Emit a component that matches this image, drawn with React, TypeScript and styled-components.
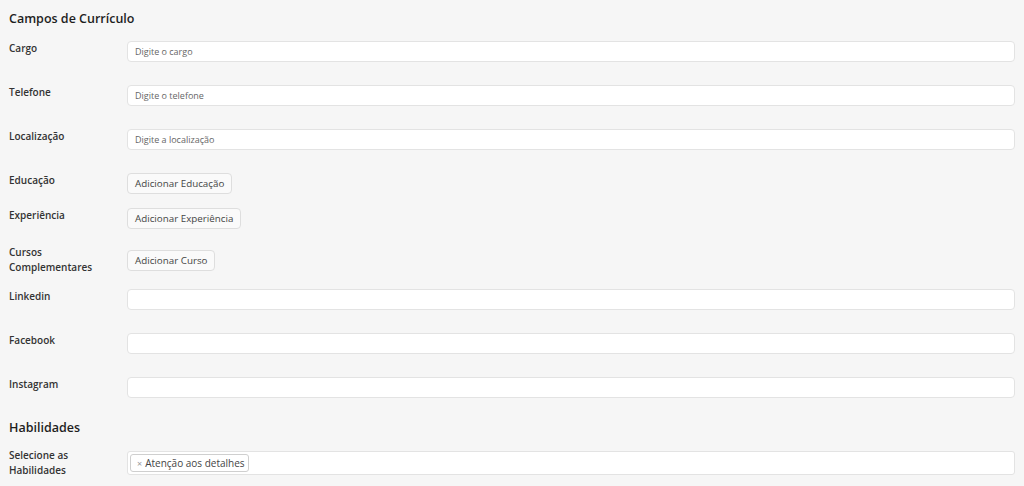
import React, { FC } from 'react';
import styled, { createGlobalStyle } from 'styled-components';

const GlobalStyle = createGlobalStyle`
  html, body {
    margin: 0;
    padding: 0;
    background: #f6f6f6;
    font-family: 'Open Sans', 'Noto Sans', sans-serif;
    color: #2b2b2b;
  }
`;

const Container = styled.div`
  padding: 9px 9px 0 9px;
`;

const SectionTitle = styled.h2<{ $top?: number }>`
  margin: ${(p) => p.$top ?? 0}px 0 0 0;
  font-size: 12.5px;
  font-weight: 600;
  line-height: 20px;
  color: #1e1e1e;
`;

const Row = styled.div<{ $mb: number; $mt?: number; $center?: boolean }>`
  display: grid;
  grid-template-columns: 118px 1fr;
  align-items: ${(p) => (p.$center ? 'center' : 'start')};
  margin-top: ${(p) => p.$mt ?? 0}px;
  margin-bottom: ${(p) => p.$mb}px;
`;

const Label = styled.label`
  font-size: 10px;
  font-weight: 600;
  line-height: 15px;
  color: #333;
`;

const Input = styled.input`
  box-sizing: border-box;
  height: 21px;
  width: 100%;
  border: 1px solid #e3e3e3;
  border-radius: 4px;
  background: #fff;
  padding: 0 7px;
  font-family: inherit;
  font-size: 9px;
  color: #333;
  outline: none;
  &::placeholder {
    color: #666;
  }
`;

const AddButton = styled.button`
  box-sizing: border-box;
  height: 21px;
  padding: 0 7px;
  border: 1px solid #dedede;
  border-radius: 4px;
  background: #fafafa;
  font-family: inherit;
  font-size: 9.8px;
  color: #444;
  justify-self: start;
  cursor: pointer;
`;

const Spacer = styled.div`
  height: 12px;
`;

const MultiSelect = styled.div`
  box-sizing: border-box;
  height: 24px;
  border: 1px solid #e3e3e3;
  border-radius: 3px;
  background: #fff;
  display: flex;
  align-items: center;
  padding: 0 2px;
`;

const Tag = styled.span`
  display: inline-flex;
  align-items: center;
  gap: 3px;
  height: 18px;
  box-sizing: border-box;
  padding: 0 3px 0 6px;
  border: 1px solid #cfcfcf;
  border-radius: 3px;
  font-size: 10px;
  color: #444;
`;

const TagRemove = styled.span`
  font-size: 9px;
  color: #999;
`;

type Field = { label: string; placeholder?: string };

const topFields: Field[] = [
  { label: 'Cargo', placeholder: 'Digite o cargo' },
  { label: 'Telefone', placeholder: 'Digite o telefone' },
  { label: 'Localização', placeholder: 'Digite a localização' },
];

const socialFields: Field[] = [{ label: 'Linkedin' }, { label: 'Facebook' }, { label: 'Instagram' }];

const App: FC = () => (
  <>
    <GlobalStyle />
    <Container>
      <SectionTitle>Campos de Currículo</SectionTitle>
      <Spacer />
      {topFields.map((f) => (
        <Row key={f.label} $mb={23}>
          <Label>{f.label}</Label>
          <Input placeholder={f.placeholder} />
        </Row>
      ))}
      <Row $mb={14}>
        <Label>Educação</Label>
        <AddButton type="button">Adicionar Educação</AddButton>
      </Row>
      <Row $mb={16}>
        <Label>Experiência</Label>
        <AddButton type="button">Adicionar Experiência</AddButton>
      </Row>
      <Row $mb={14} $center>
        <Label>
          Cursos
          <br />
          Complementares
        </Label>
        <AddButton type="button">Adicionar Curso</AddButton>
      </Row>
      {socialFields.map((f, i) => (
        <Row key={f.label} $mb={i === socialFields.length - 1 ? 0 : 23}>
          <Label>{f.label}</Label>
          <Input />
        </Row>
      ))}
      <SectionTitle $top={20}>Habilidades</SectionTitle>
      <Row $mb={0} $mt={10} $center>
        <Label>
          Selecione as
          <br />
          Habilidades
        </Label>
        <MultiSelect>
          <Tag>
            <TagRemove>×</TagRemove>
            Atenção aos detalhes
          </Tag>
        </MultiSelect>
      </Row>
    </Container>
  </>
);

export default App;
